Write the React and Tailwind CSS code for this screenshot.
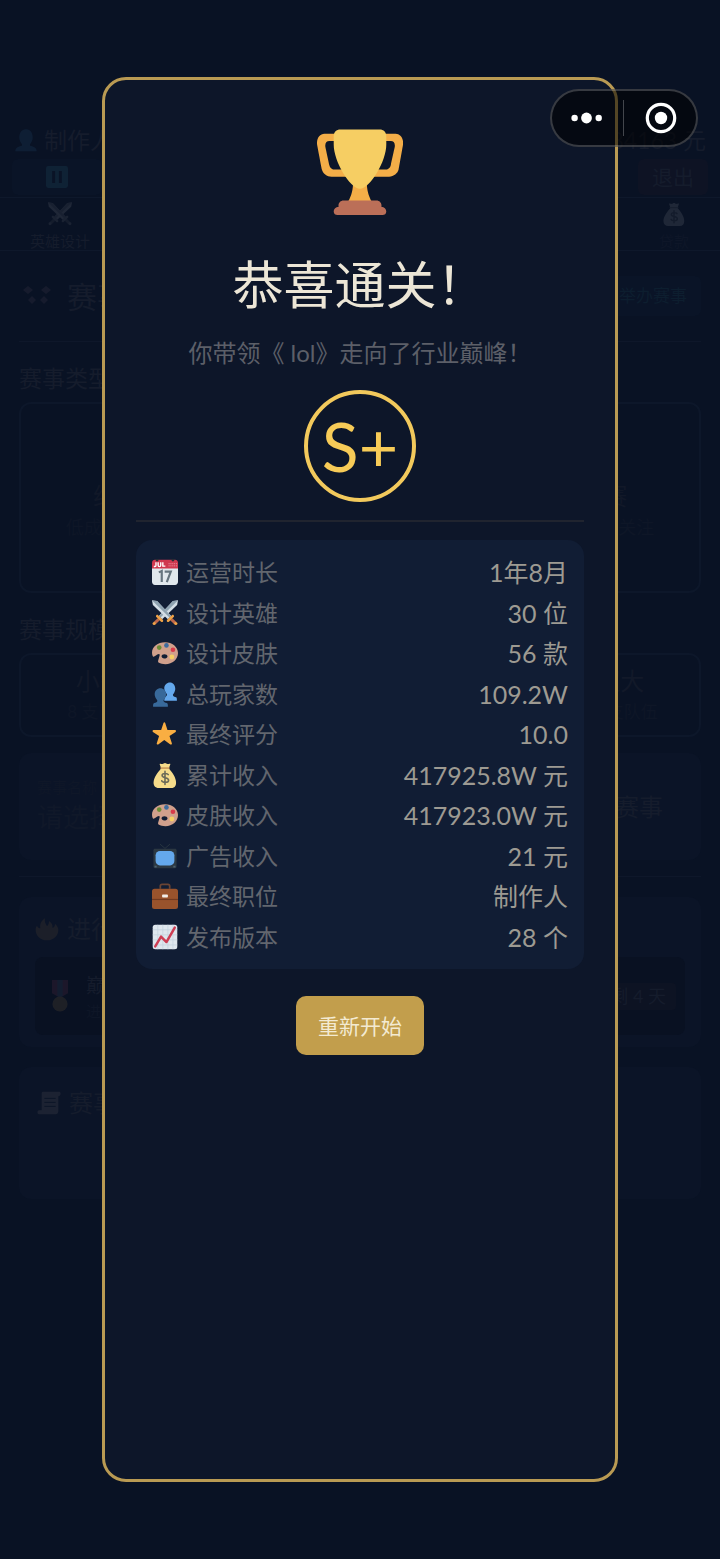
import React from "react";

function Emoji({ name, className }) {
  return (
    <svg viewBox="0 0 36 36" className={className} aria-hidden="true">
      {drawings[name]}
    </svg>
  );
}

const sword = (
  <>
    <path fill="#D3DEE6" d="M36 0.500l-1.200 6.500L14 26.500 9.500 22 29 1.500z" />
    <path fill="#8FA3B1" d="M35.500 1L11.800 24.200 9.500 22 29 1.500z" />
    <path fill="#C0694A" d="M7.800 25.200l3 3-5.600 5.400-3-3z" />
    <path fill="#F0A347" d="M6 21c.7-.7 1.800-.7 2.500 0l6.500 6.500c.7.7.7 1.800 0 2.500s-1.800.7-2.500 0L6 23.500c-.7-.7-.7-1.800 0-2.500z" />
    <circle cx="3" cy="32.500" r="2.200" fill="#F0A347" />
  </>
);

const drawings = {
  trophy: (
    <>
      <path fill="#F4AE48" d="M5.123 5h6C12.227 5 13 4.896 13 6V4c0-1.104-.773-2-1.877-2h-8c-2 0-3.583 2.125-3 5 0 0 1.791 9.375 1.917 9.958C2.373 18.500 4.164 20 6.081 20h6.958c1.105 0-.039-1.896-.039-3v-2c0 1.104-.773 2-1.877 2h-4c-1.104 0-1.833-1.042-2-2S3.539 7.667 3.539 7.667C3.206 5.750 4.018 5 5.123 5zm25.812 0h-6C23.831 5 22 4.896 22 6V4c0-1.104 1.831-2 2.935-2h8c2 0 3.584 2.125 3 5 0 0-1.633 9.419-1.771 10-.354 1.500-2.042 3-4 3h-7.146C21.914 20 22 18.104 22 17v-2c0 1.104 1.831 2 2.935 2h4c1.104 0 1.834-1.042 2-2s1.584-7.333 1.584-7.333C32.851 5.750 32.040 5 30.935 5zM20.832 22c0-6.958-2.709 0-2.709 0s-3-6.958-3 0-3.291 10-3.291 10h12.292s-3.292-3.042-3.292-10z" />
      <path fill="#F6CE63" d="M29 6.600C29 13.400 22.300 25 18 25S7 13.400 7 6.600V3c0-1.700 1.100-2.800 2.800-2.800h16.400C27.900.2 29 1.300 29 3z" />
      <path fill="#BB6F58" d="M27 32.600V32c0-1.200-.9-2.100-2.100-2.100H11.100C9.900 29.900 9 30.800 9 32v.6c-1.100 0-2 .9-2 1.900s.7 1.500 1.600 1.500h18.800c.9 0 1.600-.5 1.600-1.500s-.9-1.900-2-1.900z" />
    </>
  ),
  calendar: (
    <>
      <path fill="#E1E8ED" d="M36 32c0 2.200-1.800 4-4 4H4c-2.200 0-4-1.800-4-4V9h36z" />
      <path fill="#D0384F" d="M32 1H4C1.800 1 0 2.800 0 5v8h36V5c0-2.200-1.800-4-4-4z" />
      <path fill="none" stroke="#F0A5B2" strokeWidth="1.300" strokeDasharray="1.300 1.300" d="M23 6.500h11.500M23 9.500h11.500" />
      <path fill="none" stroke="#fff" strokeWidth="1.900" d="M5.500 4.500v4.600q0 1.300-1.300 1.300H2.500M8.500 4.500v4q0 2 1.800 2t1.800-2v-4M15 4.500v5.300h3.500" />
      <circle cx="7" cy="1.500" r="2" fill="#292F33" />
      <circle cx="29" cy="1.500" r="2" fill="#292F33" />
      <path fill="none" stroke="#66757F" strokeWidth="3" d="M9.500 18.500l4-2V32M17.500 17.500H26L20.500 32" />
    </>
  ),
  swords: (
    <>
      {sword}
      <g transform="translate(36 0) scale(-1 1)">{sword}</g>
    </>
  ),
  palette: (
    <>
      <path fill="#D0A08C" fillRule="evenodd" d="M18 3C8 3 0 9 0 17.500c0 2 .5 4 1.500 5.700 2.500.5 4.500-3 8-3.700 2 0 1 2.500.2 5C8.900 27 7.700 30.200 9 31.200 11.800 32.800 15 33.500 18.500 33.500 28.500 33.500 36 26.500 36 18S28 3 18 3zm-1 22.500c-2.200 0-3.800-1.300-3.800-2.900s1.800-2.900 4-2.900 4.300 1.200 4.300 3-2.200 2.800-4.500 2.800z" />
      <circle cx="10" cy="10.500" r="3.200" fill="#6B8C35" />
      <circle cx="20" cy="7.500" r="3.200" fill="#3E6C9E" />
      <circle cx="29" cy="13.500" r="3.200" fill="#D83A4A" />
      <circle cx="27.500" cy="23.500" r="3.400" fill="#F6CE63" />
    </>
  ),
  users: (
    <>
      <path fill="#64A8EC" d="M33.500 22.500c-2.200-.9-4.500-1.200-4.500-3.200 0-1.100.7-1.600 1.300-2.500 1.100-1.700 1.900-3.600 1.900-6C32.200 5.500 29 2 24.800 2S17 5.500 17 10c0 2.600 1 4.800 2.500 6.700.8 1 1.200 1.500 1.200 2.400 0 2.500-3.700 2.300-3.700 8.400h17.500c0-2.200 0-4.500-1-5z" />
      <path fill="#38699A" d="M20.500 30.500c-2.300-.9-4.500-1.300-4.500-3.300 0-1.100.7-1.700 1.300-2.600 1.200-1.700 2.200-3.700 2.200-6.200 0-5-3.500-8.400-7.900-8.400S3.700 13.400 3.700 18.300c0 2.700 1 4.700 2.300 6.500.8 1 1.400 1.500 1.400 2.400 0 2-2 2.400-4.200 3.300C1.300 31.200 1.500 33.500 1.500 35.800h20.500c0-2.300.1-4.600-1.500-5.300z" />
    </>
  ),
  star: (
    <path fill="#F9AE42" d="M27.300 34.700c-.3 0-.7-.1-.9-.3L18 28.200l-8.400 6.200c-1 .7-2.400-.3-2-1.600l3.200-9.900-8.500-5.800c-1.100-.8-.6-2.500.9-2.600h10.500l3.200-9.700c.4-1.200 2-1.200 2.400 0l3.100 9.700h10.500c1.400.1 1.900 1.800.8 2.600l-8.500 5.800 3.300 9.900c.3 1-.3 1.900-1.200 1.900z" transform="translate(-1 -2)" />
  ),
  money: (
    <>
      <path fill="#F6DC8B" d="M33 25.500C32 19 25.500 11.500 23.300 9L25.500 2.800c-1.500-1.200-2.500.2-4 0S19.500 1.500 18 1.500s-2 1.100-3.500 1.300-2.500-1.200-4 0L12.700 9C10.500 11.500 4 19 2.500 25.500 1 32.500 4.500 36 9.500 36h17c5.500 0 7.700-4 6.500-10.500z" />
      <path fill="none" stroke="#C18A4F" strokeWidth="1.800" d="M11.500 8.400h13" />
      <path fill="none" stroke="#6B6A59" strokeWidth="2.200" strokeLinecap="round" d="M18 13v18M22.500 17.500c-1-2-8.500-2.500-8.500 1.200 0 4 9 2.200 9 6.500 0 4-8.500 3.500-9.500.8" />
    </>
  ),
  tv: (
    <>
      <path fill="none" stroke="#273540" strokeWidth="1.300" d="M11 1.500l7 6 7-6" />
      <path fill="#2C3842" d="M34 33c0 1.100-.9 2-2 2H4c-1.100 0-2-.9-2-2V10c0-1.100.9-2 2-2h28c1.100 0 2 .9 2 2z" />
      <rect x="5" y="11" width="26" height="20" rx="6" fill="#64A8EC" />
      <path fill="#4D616F" d="M3.500 31.500h3v2.500h-3zM29.500 31.500h3v2.500h-3z" />
    </>
  ),
  briefcase: (
    <>
      <path fill="none" stroke="#6B4433" strokeWidth="2.400" d="M11.500 8V4.500q0-2.500 2.500-2.500h8q2.500 0 2.500 2.500V8" />
      <rect x="0" y="8" width="36" height="28" rx="3.500" fill="#99532C" />
      <path fill="#713A20" d="M0 22h36v1.600H0z" />
      <rect x="14" y="16" width="8" height="4" rx="1" fill="#F1EDE8" />
    </>
  ),
  chart: (
    <>
      <rect x="1" y="1" width="34" height="34" rx="3.500" fill="#DFE7EE" />
      <path fill="none" stroke="#C3D2DE" strokeWidth="1" d="M8 1v34M15 1v34M22 1v34M29 1v34M1 8h34M1 15h34M1 22h34M1 29h34" />
      <path fill="none" stroke="#CE3E54" strokeWidth="3.400" strokeLinecap="round" strokeLinejoin="round" d="M4.500 31l8-13.500 7.500 7.500L31.500 5" />
    </>
  ),
  user: (
    <path fill="#3B88C3" d="M24 26.800v-2.600c2.200-1.900 4-5.600 4-9.400C28 7.500 25 2 18 2S8 7.500 8 14.800c0 3.800 1.800 7.500 4 9.400v2.600C6 28 2 30 2 35h32c0-5-4-7-10-8.200z" />
  ),
  pause: (
    <>
      <rect width="36" height="36" rx="4" fill="#3BA0B3" />
      <path fill="#0a1224" d="M10 8h5v20h-5zM21 8h5v20h-5z" />
    </>
  ),
  gamepad: (
    <path fill="#B08A99" d="M9 8l5 4-5 4-5-4zM27 8l5 4-5 4-5-4zM13 18l4 4-4 4-4-4zM25 18l4 4-4 4-4-4z" />
  ),
  fire: (
    <path fill="#E0A040" d="M35 19c0 9-7 16-17 16S1 28 1 19c0-3 1-5 2-6 1 3 3 4 5 4-1-6 1-11 7-15-1 6 1 8 3 12 2-2 3-4 3-8 4 3 6 6 5 10 3 0 4-3 4-6 3 3 5 6 5 9z" />
  ),
  medal: (
    <>
      <path fill="#C05070" d="M9 0h18v15l-9 5-9-5z" />
      <path fill="#6E86AC" d="M15 0h6v18l-3 2-3-2z" />
      <circle cx="18" cy="27" r="8.500" fill="#D9A550" />
    </>
  ),
  scroll: (
    <>
      <path fill="#B0A090" d="M9 1h24c3 0 3 4 1 6l-2 1v22c0 3-2 5-4 5H3c-3 0-3-6 0-6h4V5c0-2 0-4 2-4z" />
      <path fill="none" stroke="#0a1224" strokeWidth="1.500" d="M11 11h17M11 17h17M11 23h17" />
    </>
  ),
};

function Outline({ children, className = "" }) {
  return <section className={`rounded-xl border-2 border-[#0d172a] ${className}`}>{children}</section>;
}

function Panel({ children, className = "" }) {
  return <section className={`rounded-xl bg-[#0b1427] ${className}`}>{children}</section>;
}

function GamePage() {
  return (
    <main className="col-start-1 row-start-1 min-w-0 overflow-hidden pt-[124px] text-[#151c2c]" aria-hidden="true" inert>
      <header>
        <div className="flex h-8 items-center justify-between px-3.5">
          <div className="flex items-center gap-1.5 text-[23px]">
            <Emoji name="user" className="size-6 opacity-10" />
            制作人
          </div>
          <span className="text-[23px]">84163 元</span>
        </div>
        <div className="flex h-[41px] items-center justify-between px-3">
          <button className="flex h-9 w-[90px] items-center justify-center rounded-md bg-[#0a1427]">
            <Emoji name="pause" className="size-[22px] opacity-10" />
          </button>
          <button className="h-9 rounded-md bg-[#0e1324] px-3.5 text-[21px]">退出</button>
        </div>
        <nav className="flex h-[54px] items-start justify-between border-y border-[#0e182b] text-[15px]">
          <div className="flex w-[120px] flex-col items-center gap-1 pt-1">
            <Emoji name="swords" className="size-6 opacity-10 grayscale" />
            英雄设计
          </div>
          <div className="flex w-[92px] flex-col items-center gap-1 pt-1 text-[#0e1628]">
            <Emoji name="money" className="size-6 opacity-10 grayscale" />
            贷款
          </div>
        </nav>
      </header>
      <div className="mx-[19px] flex h-[91px] items-center justify-between border-b border-[#0e172a]">
        <div className="flex items-center gap-3 text-[30px]">
          <Emoji name="gamepad" className="size-9 opacity-8" />
          赛事
        </div>
        <button className="h-10 rounded-md bg-[#0a1427] px-3.5 text-[17px] text-[#0d1e2f]">举办赛事</button>
      </div>
      <div className="px-[19px]">
        <h2 className="pt-5 text-[23px] leading-8">赛事类型</h2>
        <div className="mt-2 grid grid-cols-3 gap-3">
          <Outline className="flex h-[191px] flex-col items-center justify-center pt-6 text-[#111828]">
            <span className="text-[24px]">线上赛</span>
            <span className="text-[18px] text-[#0e1627]">低成本易于举办</span>
          </Outline>
          <Outline />
          <Outline className="flex flex-col items-center justify-center pt-6 text-[#111828]">
            <span className="text-[24px]">全球赛</span>
            <span className="text-[18px] text-[#0e1627]">全球玩家都关注</span>
          </Outline>
        </div>
        <h2 className="pt-5 text-[23px] leading-8">赛事规模</h2>
        <div className="mt-2 grid grid-cols-4 gap-3 text-center text-[#121929]">
          <Outline className="h-[84px] pt-2">
            <div className="text-[24px] leading-9">小型</div>
            <div className="text-[17px] text-[#0e1627]">8 支队伍</div>
          </Outline>
          <Outline />
          <Outline />
          <Outline className="pt-2">
            <div className="text-[24px] leading-9">超大</div>
            <div className="text-[17px] text-[#0e1627]">32 支队伍</div>
          </Outline>
        </div>
        <Panel className="mt-4 flex h-[107px] items-center justify-between px-[18px]">
          <div>
            <div className="text-[15px] text-[#0f1728]">赛事名称</div>
            <div className="text-[26px] text-[#101829]">请选择</div>
          </div>
          <button className="px-5 text-[24px]">举办赛事</button>
        </Panel>
        <hr className="mt-4 border-[#0e172a]" />
        <Panel className="mt-5 h-[150px] p-4">
          <div className="flex h-8 items-center gap-2 text-[24px]">
            <Emoji name="fire" className="size-6 opacity-8" />
            进行中
          </div>
          <div className="mt-3 flex h-[78px] items-center rounded-lg bg-[#091122] px-[9px]">
            <Emoji name="medal" className="size-8 opacity-10" />
            <div className="ml-2.5">
              <div className="text-[20px]">巅峰</div>
              <div className="text-[15px] text-[#0e1627]">进行中</div>
            </div>
            <div className="ml-auto rounded bg-[#0d1323] px-2.5 text-[18px]">还剩 4 天</div>
          </div>
        </Panel>
        <Panel className="mt-5 h-[132px] p-[18px]">
          <div className="flex h-9 items-center gap-2 text-[24px]">
            <Emoji name="scroll" className="size-6 opacity-10" />
            赛事
          </div>
        </Panel>
      </div>
    </main>
  );
}

const stats = [
  ["calendar", "运营时长", "1年8月"],
  ["swords", "设计英雄", "30 位"],
  ["palette", "设计皮肤", "56 款"],
  ["users", "总玩家数", "109.2W"],
  ["star", "最终评分", "10.0"],
  ["money", "累计收入", "417925.8W 元"],
  ["palette", "皮肤收入", "417923.0W 元"],
  ["tv", "广告收入", "21 元"],
  ["briefcase", "最终职位", "制作人"],
  ["chart", "发布版本", "28 个"],
];

function ResultDialog() {
  return (
    <div className="col-start-1 row-start-1 flex min-w-0 px-[102px] py-[77px]">
      <div
        role="dialog"
        aria-labelledby="result-title"
        className="z-10 flex w-full flex-col items-center rounded-3xl border-3 border-[#b99a53] bg-[#0d1629] px-[31px] pt-[49px]"
      >
        <Emoji name="trophy" className="size-[86px]" />
        <h1 id="result-title" className="mt-[34px] text-[51px] leading-[72px] whitespace-nowrap text-[#ece6d6]">恭喜通关！</h1>
        <p className="mt-4 text-[24px] leading-8 whitespace-nowrap text-[#5c5f68]">你带领《 lol》走向了行业巅峰！</p>
        <div className="mt-[21px] flex size-28 items-center justify-center rounded-full border-4 border-[#f2c95c] text-[68px] leading-none text-[#f7cb57]">
          S+
        </div>
        <hr className="mt-[18px] w-full border-t-2 border-[#20242f]" />
        <dl className="mt-[18px] grid min-h-[429px] w-full auto-rows-fr rounded-2xl bg-[#111d34] px-4 py-3">
          {stats.map(([icon, label, value]) => (
            <div key={label} className="flex items-center justify-between">
              <dt className="flex items-center gap-2 text-[23px] leading-8 text-[#62666e]">
                <Emoji name={icon} className="size-[26px]" />
                {label}
              </dt>
              <dd className="text-[25px] leading-8 text-[#9d9a92]">{value}</dd>
            </div>
          ))}
        </dl>
        <button className="mt-[27px] rounded-[10px] bg-[#c29e4c] px-[22px] py-3.5 text-[21px] leading-[31px] text-[#f3ead2]">
          重新开始
        </button>
      </div>
    </div>
  );
}

function Capsule() {
  return (
    <div className="absolute top-[89px] right-[22px] z-20 flex h-[58px] w-[148px] items-center rounded-full border-2 border-white/20 bg-black/55">
      <button aria-label="更多" className="flex h-full flex-1 items-center justify-center">
        <svg viewBox="0 0 32 12" className="h-3 w-8" fill="#fff">
          <circle cx="3.600" cy="6" r="3.200" />
          <circle cx="15.500" cy="6" r="5.400" />
          <circle cx="27.700" cy="6" r="3.200" />
        </svg>
      </button>
      <span className="h-9 w-px bg-white/25" />
      <button aria-label="关闭" className="flex h-full flex-1 items-center justify-center pl-0.5">
        <svg viewBox="0 0 32 32" className="size-8">
          <circle cx="16" cy="16" r="13.700" fill="none" stroke="#fff" strokeWidth="3.200" />
          <circle cx="16" cy="16" r="6.200" fill="#fff" />
        </svg>
      </button>
    </div>
  );
}

export default function App() {
  return (
    <div className="relative grid min-h-screen bg-[#091224] font-['Lato','Noto_Sans_CJK_SC',sans-serif]">
      <GamePage />
      <ResultDialog />
      <Capsule />
    </div>
  );
}
